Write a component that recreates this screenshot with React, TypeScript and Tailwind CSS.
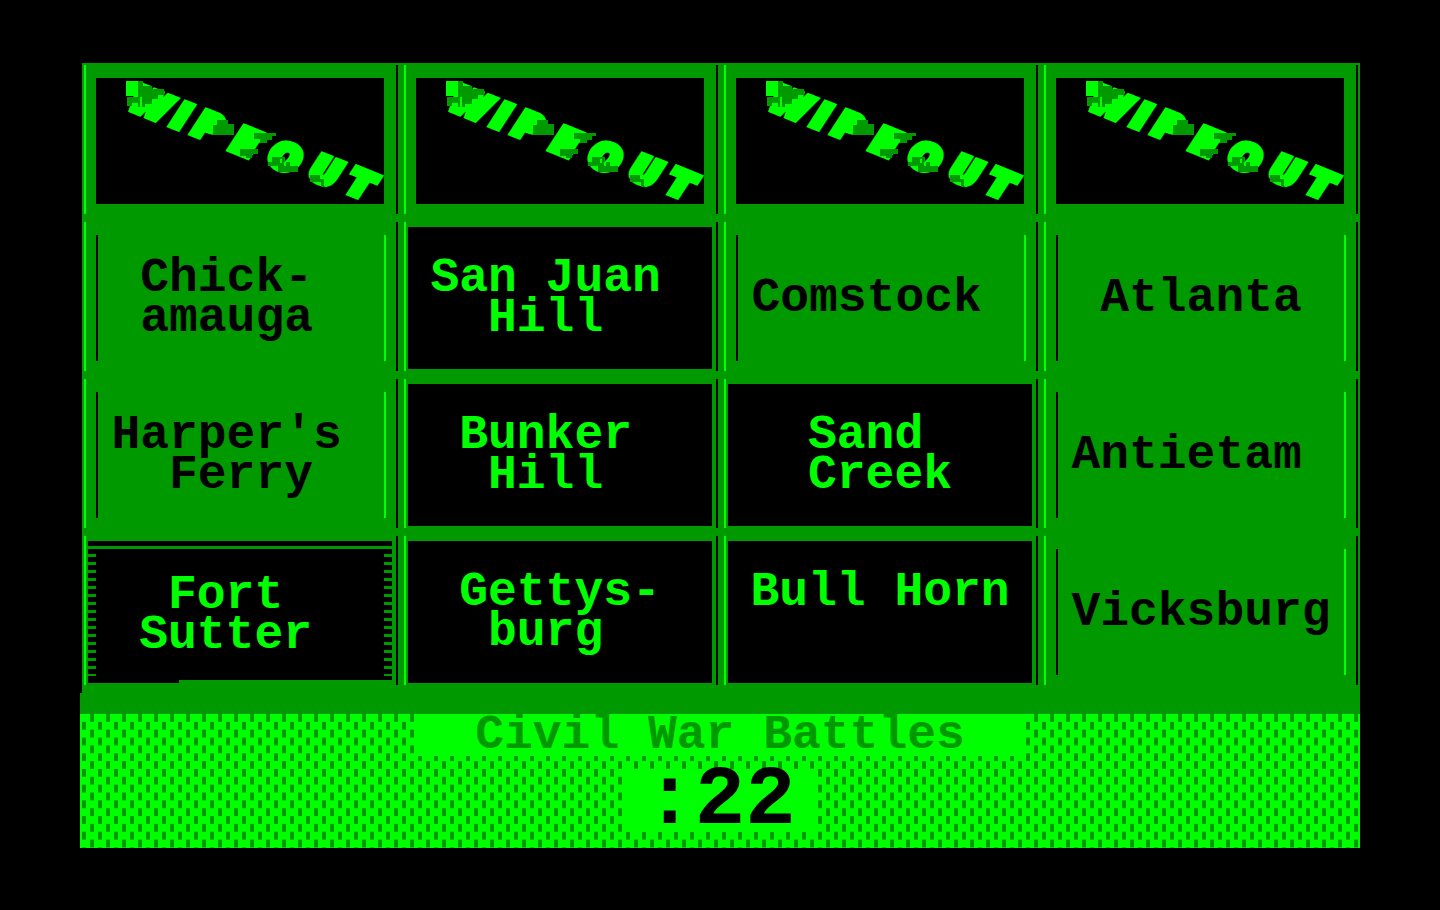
import clsx from 'clsx';

type TileState = 'open' | 'picked' | 'cursor' | 'wipeout';

interface Tile {
  state: TileState;
  // Spaces indent each line inside the nine-column name field
  lines: string;
}

const TILES: Tile[] = [
  { state: 'wipeout', lines: '' },
  { state: 'wipeout', lines: '' },
  { state: 'wipeout', lines: '' },
  { state: 'wipeout', lines: '' },
  { state: 'open', lines: ' Chick-\n amauga' },
  { state: 'picked', lines: 'San Juan\n  Hill' },
  { state: 'open', lines: 'Comstock' },
  { state: 'open', lines: ' Atlanta' },
  { state: 'open', lines: "Harper's\n  Ferry" },
  { state: 'picked', lines: ' Bunker\n  Hill' },
  { state: 'picked', lines: '  Sand\n  Creek' },
  { state: 'open', lines: 'Antietam' },
  { state: 'cursor', lines: '  Fort\n Sutter' },
  { state: 'picked', lines: ' Gettys-\n  burg' },
  { state: 'picked', lines: 'Bull Horn\n ' },
  { state: 'open', lines: 'Vicksburg' },
];

function WipeoutLogo() {
  return (
    <svg viewBox="0 0 288 126" className="block h-[126px] w-full overflow-visible" shapeRendering="crispEdges">
      <text
        x="32 75 96 134 171 212 249"
        y="30 47 55 71 85 99 113"
        rotate="22"
        className="fill-[#00ff00] stroke-[#00ff00] font-['DejaVu_Sans',sans-serif] text-[35px] font-bold italic"
        strokeWidth="7"
      >
        WIPEOUT
      </text>
      {/* Shaded patches */}
      <g fill="#009a00">
        <path d="M42 3H47V8H56V11H68V17H62V21H56V26H49V29H42V25H36V28H31V19H42Z" />
        <path d="M121 42H132V46H138V57H117V47H121Z" />
        <path d="M158 55H180V58H176V62H171V65H164V61H158Z" />
        <path d="M144 71H162V76H156V80H150V78H144Z" />
        <path d="M176 79H189V84H194V88H202V94H182V88H172V84H176Z" />
        <path d="M214 97H224V101H228V109H225V104H214Z" />
      </g>
      <path d="M30 3H42V18H30ZM44 19H46V30H44Z" fill="#00ff00" />
      <path d="M184 81H186V85H184ZM188 84H190V88H188Z" fill="#00ff00" />
    </svg>
  );
}

function TileName({ lines }: { lines: string }) {
  return <p className="w-[9ch] whitespace-pre">{lines}</p>;
}

// Tick marks down one side of the selected tile
function Ticks() {
  return (
    <div className="h-[122px] w-2 bg-[repeating-linear-gradient(to_bottom,#009a00_0px,#009a00_3px,#000_3px,#000_8px)]" />
  );
}

function TileFace({ state, lines }: Tile) {
  if (state === 'wipeout') {
    return (
      <div className="pt-[13px] pr-3 pb-2.5 pl-2.5">
        <div className="bg-black">
          <WipeoutLogo />
        </div>
      </div>
    );
  }

  if (state === 'open') {
    return (
      <div className="px-2.5 pt-[13px] pb-2.5">
        <div className="flex h-[126px] items-center justify-center border-l-2 border-l-black border-r-2 border-r-[#00ff00] text-black">
          <TileName lines={lines} />
        </div>
      </div>
    );
  }

  return (
    <div className="pt-[5px] pr-1 pb-0.5 pl-0.5">
      <div
        className={clsx(
          'h-[142px] bg-black text-[#00ff00]',
          state === 'picked' && 'flex items-center justify-center',
          state === 'cursor' && 'flex flex-col justify-between pt-[5px]',
        )}
      >
        {state === 'cursor' ? (
          <>
            <div className="h-[3px] bg-[#009a00]" />
            <div className="flex items-center justify-between">
              <Ticks />
              <TileName lines={lines} />
              <Ticks />
            </div>
            <div className="ml-auto h-[3px] w-[70%] bg-[#009a00]" />
          </>
        ) : (
          <TileName lines={lines} />
        )}
      </div>
    </div>
  );
}

function ScorePanel() {
  return (
    <footer className="grid bg-[#00ff00]">
      <svg className="col-start-1 row-start-1 h-[134px] w-full" shapeRendering="crispEdges">
        <defs>
          <pattern id="weave" width="16" height="15.7" patternUnits="userSpaceOnUse">
            <path d="M10 0h4v7.85h-4zM2 7.85h4v7.85h-4z" fill="#009a00" />
          </pattern>
        </defs>
        <rect width="100%" height="100%" fill="url(#weave)" />
      </svg>
      <div className="col-start-1 row-start-1 flex flex-col items-center gap-[13px]">
        <h1 className="h-[42px] w-[608px] bg-[#00ff00] text-center leading-[42px] text-[#009a00]">
          Civil War Battles
        </h1>
        <div
          role="timer"
          className="h-[63px] w-48 bg-[#00ff00] text-center text-[84px] leading-[64px] text-black"
        >
          :22
        </div>
      </div>
    </footer>
  );
}

export default function App() {
  return (
    <main className="min-h-screen bg-black px-20 py-[63px] font-['Liberation_Mono',monospace] text-5xl leading-10 font-bold">
      <div className="grid grid-cols-4 bg-[linear-gradient(90deg,#000_2px,#009a00_2px)] pb-0.5">
        {TILES.map((tile, i) => (
          <div key={i} className="pt-0.5 pr-0.5 pb-1.5 pl-1">
            <div className="border-l-2 border-l-[#00ff00] border-r-2 border-r-black">
              <TileFace {...tile} />
            </div>
          </div>
        ))}
      </div>
      <div className="h-[21px] bg-[#009a00]" />
      <ScorePanel />
    </main>
  );
}
